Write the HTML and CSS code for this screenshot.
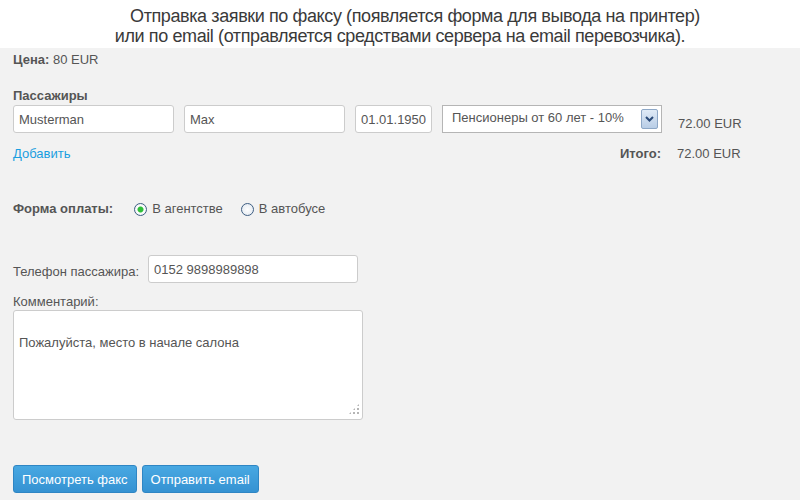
FILE: index.html
```html
<!DOCTYPE html>
<html lang="ru">
<head>
    <meta charset="UTF-8">
    <title>Бронирование</title>
    <link rel="stylesheet" href="styles.css">
</head>
<body>
    <div class="caption">
        <div class="caption-first">Отправка заявки по факсу (появляется форма для вывода на принтер)</div>
        <div>или по email (отправляется средствами сервера на email перевозчика).</div>
    </div>

    <div class="form">
        <div class="price"><b>Цена:</b> 80 EUR</div>

        <div class="section-title">Пассажиры</div>
        <div class="passenger">
            <input class="field name" type="text" value="Musterman">
            <input class="field name" type="text" value="Max">
            <input class="field date" type="text" value="01.01.1950">
            <div class="select-wrap">
                <select class="field discount">
                    <option>Пенсионеры от 60 лет - 10%</option>
                </select>
                <span class="select-arrow">
                    <svg width="9" height="6" viewBox="0 0 9 6"><path d="M1 1 L4.5 4.5 L8 1" fill="none" stroke="#2a4a78" stroke-width="2"/></svg>
                </span>
            </div>
            <span class="amount">72.00 EUR</span>
        </div>

        <div class="total-row">
            <div class="total-left">
                <a href="#" class="add-link">Добавить</a>
                <span class="total-label">Итого:</span>
            </div>
            <span class="amount">72.00 EUR</span>
        </div>

        <div class="payment">
            <span class="payment-label">Форма оплаты:</span>
            <label class="radio"><input type="radio" name="pay" checked> В агентстве</label>
            <label class="radio"><input type="radio" name="pay"> В автобусе</label>
        </div>

        <div class="phone-row">
            <label class="phone-label">Телефон пассажира:</label>
            <input class="field phone" type="text" value="0152 9898989898">
        </div>

        <div class="comment-label">Комментарий:</div>
        <div class="comment-wrap">
            <textarea class="comment">

Пожалуйста, место в начале салона</textarea>
            <span class="grip"></span>
        </div>

        <div class="actions">
            <button class="btn">Посмотреть факс</button>
            <button class="btn">Отправить email</button>
        </div>
    </div>
</body>
</html>
```

FILE: styles.css
```css
body {
    margin: 0;
    font-family: "Liberation Sans", Arial, sans-serif;
    background: #f2f2f2;
    color: #555;
}
.caption {
    background: #fff;
    height: 48px;
    padding-top: 6px;
    box-sizing: border-box;
    text-align: center;
    font-size: 18px;
    line-height: 20px;
    color: #3a3a3a;
    letter-spacing: -0.4px;
}
.caption-first {
    padding-left: 30px;
}
.form {
    padding: 2px 13px 0;
    font-size: 13px;
}
.price {
    line-height: 16px;
    margin-top: 2px;
}
.price b,
.section-title,
.total-label,
.payment-label {
    font-weight: bold;
    color: #555;
}
.section-title {
    margin-top: 20px;
    line-height: 16px;
}
.passenger {
    display: flex;
    align-items: flex-start;
    gap: 10px;
    margin-top: 1px;
}
.field {
    font-family: "Liberation Sans", Arial, sans-serif;
    font-size: 13px;
    color: #555;
    background: #fff;
    border: 1px solid #ccc;
    border-radius: 3px;
    height: 28px;
    box-sizing: border-box;
    padding: 0 5px;
    outline: none;
}
.name {
    width: 161px;
}
.date {
    width: 77px;
}
.select-wrap {
    position: relative;
}
.discount {
    appearance: none;
    width: 220px;
    border-radius: 0;
    border-color: #b5b5b5;
    padding-left: 9px;
    padding-bottom: 3px;
}
.select-arrow {
    position: absolute;
    right: 4px;
    top: 4px;
    width: 15px;
    height: 18px;
    border: 1px solid #8da7c6;
    border-radius: 2px;
    background: linear-gradient(#dfeaf6, #b8cde6);
    display: flex;
    align-items: center;
    justify-content: center;
}
.amount {
    color: #555;
    line-height: 16px;
}
.passenger .amount {
    margin-top: 11px;
    margin-left: 6px;
}
.total-row {
    display: flex;
    margin-top: 13px;
    line-height: 16px;
}
.total-left {
    width: 648px;
    display: flex;
    justify-content: space-between;
    margin-right: 16px;
}
.add-link {
    color: #1a9ee0;
    text-decoration: none;
}
.payment {
    display: flex;
    align-items: center;
    margin-top: 39px;
    line-height: 16px;
}
.payment-label {
    margin-right: 21px;
}
.radio {
    display: flex;
    align-items: center;
    margin-right: 18px;
}
.radio input {
    appearance: none;
    width: 13px;
    height: 13px;
    margin: 0 5px 0 0;
    border: 1px solid #3e5e82;
    border-radius: 50%;
    background: radial-gradient(circle, #fff 0, #dfe6ee 100%);
}
.radio input:checked {
    background: radial-gradient(circle, #2fbf3a 0 2.5px, #fff 3.5px, #dfe6ee 100%);
}
.phone-row {
    display: flex;
    align-items: center;
    margin-top: 38px;
}
.phone-label {
    width: 135px;
    padding-top: 4px;
}
.phone {
    width: 210px;
}
.comment-label {
    margin-top: 11px;
    line-height: 16px;
}
.comment-wrap {
    position: relative;
    width: 350px;
}
.comment {
    display: block;
    width: 350px;
    height: 110px;
    box-sizing: border-box;
    border: 1px solid #ccc;
    border-radius: 3px;
    background: #fff;
    font-family: "Liberation Sans", Arial, sans-serif;
    font-size: 13px;
    line-height: 20px;
    color: #555;
    padding: 2px 5px;
    resize: none;
    outline: none;
}
.grip {
    position: absolute;
    right: 3px;
    bottom: 5px;
    width: 12px;
    height: 12px;
    background:
        radial-gradient(circle, #b5b5b5 1px, transparent 1.3px) 0 0 / 4px 4px;
    clip-path: polygon(100% 0, 100% 100%, 0 100%);
}
.actions {
    display: flex;
    gap: 5px;
    margin-top: 45px;
}
.btn {
    height: 28px;
    padding: 0 8px;
    font-family: "Liberation Sans", Arial, sans-serif;
    font-size: 13px;
    color: #fff;
    background: linear-gradient(#48a8e2, #3592d2);
    border: 1px solid #2f86c4;
    border-radius: 3px;
}
```
